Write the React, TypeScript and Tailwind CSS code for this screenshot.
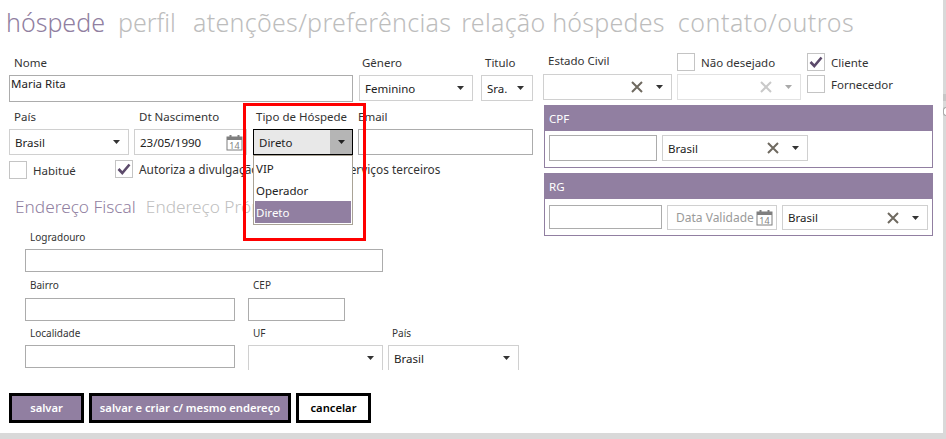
import React from "react";
import clsx from "clsx";

const Caret = ({ className }: { className?: string }) => (
  <svg width="7" height="4" viewBox="0 0 7 4" className={clsx("shrink-0", className)}>
    <path d="M0 0h7L3.5 4z" fill="currentColor" />
  </svg>
);

const Cross = ({ className }: { className?: string }) => (
  <svg width="12" height="12" viewBox="0 0 12 12" fill="none" stroke="currentColor" strokeWidth="2" className={clsx("shrink-0", className)}>
    <path d="M1 1l10 10M11 1L1 11" />
  </svg>
);

const Calendar = () => (
  <svg width="17" height="17" viewBox="0 0 17 17" className="shrink-0 text-[#7f7f7f]">
    <rect x="1" y="3" width="15" height="13" fill="#fff" stroke="currentColor" />
    <rect x="1" y="3" width="15" height="3" fill="currentColor" />
    <rect x="3.5" y="1" width="2" height="3" fill="currentColor" />
    <rect x="11.5" y="1" width="2" height="3" fill="currentColor" />
    <text x="8.5" y="14.5" fontSize="9" textAnchor="middle" fill="currentColor" fontFamily="Noto Sans, sans-serif">14</text>
  </svg>
);

const Check = () => (
  <svg width="14" height="12" viewBox="0 0 14 12" fill="none" stroke="#5c4a6b" strokeWidth="2.6">
    <path d="M1.5 6l3.8 4L12.5 1.5" />
  </svg>
);

const Checkbox = ({ checked, className }: { checked?: boolean; className?: string }) => (
  <span className={clsx("flex shrink-0 items-center justify-center border border-[#c4c4c4] bg-white", className)}>
    {checked && <Check />}
  </span>
);

const TextBox = ({ className, children }: { className?: string; children?: React.ReactNode }) => (
  <div className={clsx("border border-[#acacac] bg-white", className)}>{children}</div>
);

const Select = ({
  value,
  clearable,
  muted,
  className,
}: {
  value?: string;
  clearable?: boolean;
  muted?: boolean;
  className?: string;
}) => (
  <div className={clsx("flex items-center border border-[#d0d0d0] bg-white pl-[5px] pr-[8px] text-[11.5px] text-[#222]", className)}>
    <span className="flex-1 truncate pt-[1px]">{value}</span>
    {clearable && <Cross className={clsx("mr-[13px]", muted ? "text-[#c9c9c9]" : "text-[#6f6a60]")} />}
    <Caret className={muted ? "text-[#a9a9a9]" : "text-[#333]"} />
  </div>
);

const Label = ({ className, children }: { className?: string; children: React.ReactNode }) => (
  <div className={clsx("text-[11.5px] leading-[16px] text-[#333]", className)}>{children}</div>
);

const SmallLabel = ({ className, children }: { className?: string; children: React.ReactNode }) => (
  <div className={clsx("text-[10px] leading-[14px] text-[#333]", className)}>{children}</div>
);

const DocPanel = ({ title, className, children }: { title: string; className?: string; children: React.ReactNode }) => (
  <div className={clsx("border border-[#917fa1] border-t-0 bg-white", className)}>
    <div className="flex h-[26px] items-center bg-[#917fa1] pl-[4px] pt-[1px] text-[11.5px] text-white">{title}</div>
    {children}
  </div>
);

const ActionButton = ({ primary, className, children }: { primary?: boolean; className?: string; children: React.ReactNode }) => (
  <button
    className={clsx(
      "h-[30px] border-[3px] border-black text-[11.2px] font-semibold",
      primary ? "bg-[#917fa1] text-white" : "bg-white text-black",
      className
    )}
  >
    {children}
  </button>
);

export default function App() {
  return (
    <div className="relative flex h-[439px] w-[946px] flex-col overflow-hidden bg-white font-['Noto_Sans',sans-serif]">
      <div className="flex h-[433px] flex-col">
        <div className="flex h-[46px] items-center pb-[2px] pl-[6px] text-[25px] font-light leading-none text-[#bdbdbd]">
          <span className="text-[#917fa1]">hóspede</span>
          <span className="ml-[13px]">perfil</span>
          <span className="ml-[17px] tracking-[0.3px]">atenções/preferências</span>
          <span className="ml-[10px] tracking-[0.25px]">relação hóspedes</span>
          <span className="ml-[13px] tracking-[0.5px]">contato/outros</span>
        </div>

        <div className="flex">
          <div className="w-[544px] shrink-0 pl-[9px]">
            <div className="mt-[9px] flex">
              <div className="w-[344px]">
                <Label className="pl-[5px]">Nome</Label>
                <TextBox className="mt-[4px] h-[27px] pl-[1px] text-[11.5px] leading-[16px] text-[#222]">Maria Rita</TextBox>
              </div>
              <div className="ml-[6px] w-[114px]">
                <Label className="pl-[3px]">Gênero</Label>
                <Select value="Feminino" className="mt-[4px] h-[26px]" />
              </div>
              <div className="ml-[8px] w-[52px]">
                <Label className="pl-[4px]">Titulo</Label>
                <Select value="Sra." className="mt-[4px] h-[26px]" />
              </div>
            </div>

            <div className="mt-[7px] flex">
              <div className="w-[120px]">
                <Label className="pl-[5px]">País</Label>
                <Select value="Brasil" className="mt-[4px] h-[26px]" />
              </div>
              <div className="ml-[5px] w-[113px]">
                <Label className="pl-[5px]">Dt Nascimento</Label>
                <div className="mt-[4px] flex h-[26px] items-center border border-[#d0d0d0] bg-white pl-[5px] pr-[3px] text-[11.5px] text-[#222]">
                  <span className="flex-1 pt-[1px]">23/05/1990</span>
                  <Calendar />
                </div>
              </div>
              <div className="ml-[6px] w-[100px]">
                <Label className="pl-[3px]">Tipo de Hóspede</Label>
                <div className="mt-[4px] flex h-[26px] items-center border border-black bg-[#e8e8e8] text-[11.5px] text-[#222]">
                  <span className="flex-1 pl-[5px] pt-[1px]">Direto</span>
                  <span className="flex h-full w-[22px] items-center justify-center bg-[#b5b5b5]">
                    <Caret />
                  </span>
                </div>
              </div>
              <div className="ml-[5px] w-[175px]">
                <Label>Email</Label>
                <TextBox className="mt-[4px] h-[26px]" />
              </div>
            </div>

            <div className="mt-[6px] flex items-start text-[11.5px] text-[#333]">
              <Checkbox className="h-[18px] w-[18px]" />
              <span className="ml-[6px] mt-[1px] w-[82px]">Habitué</span>
              <Checkbox checked className="-mt-[1px] h-[18px] w-[18px]" />
              <span className="ml-[6px] text-[11.85px]">Autoriza a divulgação de dados para serviços terceiros</span>
            </div>

            <div className="mt-[16px] flex pl-[6px] text-[17.25px] font-light leading-[24px] text-[#c0c0c0]">
              <span className="text-[#917fa1]">Endereço Fiscal</span>
              <span className="ml-[10px]">Endereço Próprio</span>
            </div>

            <div className="pl-[16px]">
              <SmallLabel className="mt-[11px] pl-[5px]">Logradouro</SmallLabel>
              <TextBox className="mt-[5px] h-[23px] w-[358px]" />

              <div className="mt-[6px] flex">
                <div className="w-[210px]">
                  <SmallLabel className="pl-[5px]">Bairro</SmallLabel>
                  <TextBox className="mt-[6px] h-[23px]" />
                </div>
                <div className="ml-[13px] w-[97px]">
                  <SmallLabel className="pl-[5px]">CEP</SmallLabel>
                  <TextBox className="mt-[6px] h-[23px]" />
                </div>
              </div>

              <div className="mt-[5px] flex">
                <div className="w-[210px]">
                  <SmallLabel className="pl-[5px]">Localidade</SmallLabel>
                  <TextBox className="mt-[5px] h-[23px]" />
                </div>
                <div className="ml-[13px] w-[135px]">
                  <SmallLabel className="pl-[5px]">UF</SmallLabel>
                  <Select className="mt-[5px] h-[25px] border-b-0" />
                </div>
                <div className="ml-[5px] w-[131px]">
                  <SmallLabel className="pl-[4px]">País</SmallLabel>
                  <Select value="Brasil" className="mt-[5px] h-[25px] border-b-0 pl-[4px]" />
                </div>
              </div>
            </div>

            <div className="mt-[23px] flex gap-[5px]">
              <ActionButton primary className="w-[75px]">salvar</ActionButton>
              <ActionButton primary className="w-[202px]">salvar e criar c/ mesmo endereço</ActionButton>
              <ActionButton className="w-[75px]">cancelar</ActionButton>
            </div>
          </div>

          <div className="w-[389px] shrink-0">
            <div className="mt-[7px] flex">
              <div className="w-[133px]">
                <Label className="pl-[4px]">Estado Civil</Label>
                <Select clearable className="ml-[-1px] mt-[5px] h-[26px] w-[129px]" />
              </div>
              <div className="w-[130px]">
                <div className="flex h-[18px] items-center text-[11.5px] text-[#333]">
                  <Checkbox className="h-[18px] w-[18px]" />
                  <span className="ml-[6px] pt-[1px]">Não desejado</span>
                </div>
                <Select clearable muted className="mt-[3px] h-[26px] w-[124px] border-[#e2e2e2]" />
              </div>
              <div className="text-[11.5px] text-[#333]">
                <div className="flex h-[18px] items-center">
                  <Checkbox checked className="h-[18px] w-[18px]" />
                  <span className="ml-[6px] pt-[1px]">Cliente</span>
                </div>
                <div className="mt-[4px] flex h-[18px] items-center">
                  <Checkbox className="h-[18px] w-[18px]" />
                  <span className="ml-[6px] pt-[1px]">Fornecedor</span>
                </div>
              </div>
            </div>

            <DocPanel title="CPF" className="mt-[5px] h-[63px]">
              <div className="mt-[4px] flex pl-[4px]">
                <TextBox className="h-[26px] w-[108px]" />
                <Select clearable value="Brasil" className="ml-[5px] h-[26px] w-[146px]" />
              </div>
            </DocPanel>

            <DocPanel title="RG" className="mt-[5px] h-[63px]">
              <div className="mt-[6px] flex pl-[4px]">
                <TextBox className="h-[24px] w-[113px]" />
                <div className="ml-[5px] flex h-[25px] w-[110px] items-center border border-[#d0d0d0] pl-[8px] pr-[3px] text-[12px] text-[#9a9a9a]">
                  <span className="flex-1">Data Validade</span>
                  <Calendar />
                </div>
                <Select clearable value="Brasil" className="ml-[5px] h-[25px] w-[146px]" />
              </div>
            </DocPanel>
          </div>
        </div>
      </div>

      <div className="h-[6px] bg-[#d9d9d9]" />

      {/* aberto por cima do formulario */}
      <div className="absolute left-[253px] top-[155px] w-[100px] border border-[#a9a396] bg-white p-[1px] text-[11.5px] text-[#222]">
        <div className="flex h-[22px] items-center pl-[1px] pt-[1px]">VIP</div>
        <div className="flex h-[22px] items-center pl-[1px] pt-[1px]">Operador</div>
        <div className="flex h-[22px] items-center bg-[#917fa1] pl-[1px] pt-[1px] text-white">Direto</div>
      </div>
      <div className="pointer-events-none absolute left-[243px] top-[103px] h-[138px] w-[123px] border-[3px] border-[#ff0000]" />

      {/* barra de rolagem da janela de tras */}
      <div className="absolute right-0 top-0 h-[439px] w-[3px] bg-[#d9d9d9]">
        <div className="mt-[94px] h-[7px] bg-[#c6c6c6]" />
        <div className="mt-[6px] h-[9px] w-[3px] rounded-l-full border border-r-0 border-[#aaaaaa] bg-white" />
      </div>
    </div>
  );
}
